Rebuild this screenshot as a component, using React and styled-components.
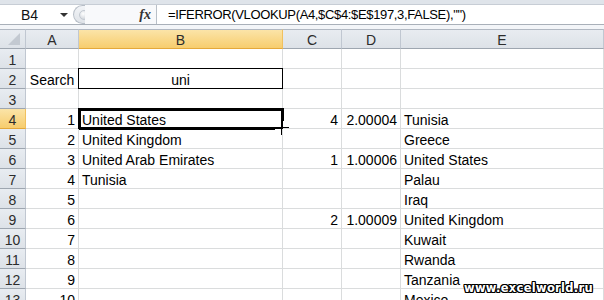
import React from "react";
import styled, { createGlobalStyle } from "styled-components";

const Global = createGlobalStyle`
  body {
    margin: 0;
    background: #ffffff;
    overflow: hidden;
    font-family: "Liberation Sans", Arial, sans-serif;
  }
`;

const Page = styled.div`
  width: 604px;
  height: 300px;
  overflow: hidden;
  position: relative;
  background: #fff;
`;

const TopBar = styled.div`
  height: 29px;
  box-sizing: border-box;
  background: #dfe4ea;
  padding-top: 4px;
  display: flex;
  flex-direction: column;
`;

const BarRow = styled.div`
  height: 21px;
  display: flex;
  background: #fff;
  border-top: 1px solid #c7cdd5;
  border-bottom: 1px solid #a9b0b9;
  box-sizing: border-box;
`;

const BarGap = styled.div`
  flex: 1;
  background: #f3f5f8;
`;

const NameBox = styled.div`
  width: 73px;
  display: flex;
  align-items: center;
  font-size: 14px;
  color: #111;
  padding-left: 21px;
  box-sizing: border-box;
  position: relative;
`;

const Caret = styled.span`
  position: absolute;
  left: 60px;
  top: 8px;
  width: 0;
  height: 0;
  border-left: 4px solid transparent;
  border-right: 4px solid transparent;
  border-top: 4px solid #333;
`;

const Handle = styled.div`
  width: 12px;
  background: linear-gradient(#f2f4f7, #dfe3e8);
  border: 1px solid #b7bec7;
  border-right: none;
  border-radius: 10px 0 0 10px;
  box-sizing: border-box;
  display: flex;
  align-items: center;
  justify-content: flex-end;
`;

const Dot = styled.span`
  width: 8px;
  height: 8px;
  border-radius: 50%;
  margin-right: -4px;
  background: radial-gradient(circle at 40% 35%, #ffffff, #c4cad2);
  border: 1px solid #c3c9d1;
`;

const FxBox = styled.div`
  width: 66px;
  background: #f8f9fb;
  border-right: 1px solid #b9c0c8;
  display: flex;
  align-items: center;
  justify-content: flex-end;
  padding-right: 5px;
  font-family: "Liberation Serif", serif;
  font-style: italic;
  font-weight: bold;
  font-size: 14px;
  color: #333;
`;

const Formula = styled.div`
  flex: 1;
  padding-left: 11px;
  display: flex;
  align-items: center;
  font-size: 13px;
  letter-spacing: -0.35px;
  color: #000;
  white-space: nowrap;
`;

const Grid = styled.div`
  display: grid;
  grid-template-columns: 26px 53px 204px 59px 59px 203px;
  grid-auto-rows: 20px;
`;

const Head = styled.div`
  box-sizing: border-box;
  border-right: 1px solid ${(p) => (p.$sel ? "#f1c15f" : "#c0c7d1")};
  border-bottom: 1px solid ${(p) => (p.$sel ? "#e4a83a" : "#9ea6b0")};
  border-top: ${(p) => (p.$top ? "1px solid #b1b8c2" : "none")};
  background: ${(p) =>
    p.$sel
      ? "linear-gradient(#fbe4a8, #f7cd6e)"
      : "linear-gradient(#e8ecf1, #dde2e8)"};
  display: flex;
  align-items: center;
  justify-content: center;
  padding-top: ${(p) => (p.$top ? "1px" : "2px")};
  font-size: 14px;
  color: #2c2c2c;
  position: relative;
`;

const Corner = styled.span`
  position: absolute;
  right: 5px;
  bottom: 3px;
  width: 0;
  height: 0;
  border-left: 12px solid transparent;
  border-bottom: 12px solid #c3c9d1;
`;

const Cell = styled.div`
  box-sizing: border-box;
  border-right: 1px solid #dadcdd;
  border-bottom: 1px solid #dadcdd;
  display: flex;
  align-items: center;
  justify-content: ${(p) =>
    p.$align === "right" ? "flex-end" : p.$align === "center" ? "center" : "flex-start"};
  padding: 3px 3px 0 3px;
  font-size: 14px;
  color: #000;
  white-space: nowrap;
  position: relative;
  overflow: visible;
`;

const SearchBox = styled.span`
  position: absolute;
  left: -1px;
  top: -1px;
  right: -1px;
  bottom: -1px;
  border: 1px solid #000;
  pointer-events: none;
`;

const Selection = styled.span`
  position: absolute;
  left: -1px;
  top: -1px;
  right: -2px;
  bottom: -2px;
  border: 3px solid #000;
  pointer-events: none;
`;

const FillCross = styled.span`
  position: absolute;
  right: -7px;
  bottom: -7px;
  width: 14px;
  height: 14px;
  background: #fff;
  pointer-events: none;
  &::before,
  &::after {
    content: "";
    position: absolute;
    background: #000;
  }
  &::before {
    left: 0;
    top: 6px;
    width: 14px;
    height: 2px;
  }
  &::after {
    top: 0;
    left: 6px;
    width: 2px;
    height: 14px;
  }
`;

const Watermark = styled.div`
  position: absolute;
  left: 464px;
  top: 281px;
  font-family: "DejaVu Sans", sans-serif;
  font-weight: bold;
  font-size: 11.5px;
  letter-spacing: 0.3px;
  color: #fff;
  text-shadow: -1px -1px 0 #000, 1px -1px 0 #000, -1px 1px 0 #000,
    1px 1px 0 #000, 0 1px 0 #000, 0 -1px 0 #000, 1px 0 0 #000, -1px 0 0 #000;
`;

const cols = ["A", "B", "C", "D", "E"];

const rows = [
  {},
  { a: "Search", aAlign: "center", b: "uni", bAlign: "center", search: true },
  {},
  { a: "1", b: "United States", c: "4", d: "2.00004", e: "Tunisia", sel: true },
  { a: "2", b: "United Kingdom", e: "Greece" },
  { a: "3", b: "United Arab Emirates", c: "1", d: "1.00006", e: "United States" },
  { a: "4", b: "Tunisia", e: "Palau" },
  { a: "5", e: "Iraq" },
  { a: "6", c: "2", d: "1.00009", e: "United Kingdom" },
  { a: "7", e: "Kuwait" },
  { a: "8", e: "Rwanda" },
  { a: "9", e: "Tanzania" },
  { a: "10", e: "Mexico" },
];

const App = () => {
  return (
    <Page>
      <Global />
      <TopBar>
        <BarRow>
          <NameBox>
            B4
            <Caret />
          </NameBox>
          <Handle>
            <Dot />
          </Handle>
          <FxBox>fx</FxBox>
          <Formula>=IFERROR(VLOOKUP(A4,$C$4:$E$197,3,FALSE),"")</Formula>
        </BarRow>
        <BarGap />
      </TopBar>
      <Grid>
        <Head $top>
          <Corner />
        </Head>
        {cols.map((c) => (
          <Head key={c} $top $sel={c === "B"}>
            {c}
          </Head>
        ))}
        {rows.map((r, i) => (
          <React.Fragment key={i}>
            <Head $sel={r.sel}>{i + 1}</Head>
            <Cell $align={r.aAlign || "right"}>{r.a}</Cell>
            <Cell $align={r.bAlign || "left"}>
              {r.b}
              {r.search && <SearchBox />}
              {r.sel && <Selection />}
              {r.sel && <FillCross />}
            </Cell>
            <Cell $align="right">{r.c}</Cell>
            <Cell $align="right">{r.d}</Cell>
            <Cell>{r.e}</Cell>
          </React.Fragment>
        ))}
      </Grid>
      <Watermark>www.excelworld.ru</Watermark>
    </Page>
  );
};

export default App;
